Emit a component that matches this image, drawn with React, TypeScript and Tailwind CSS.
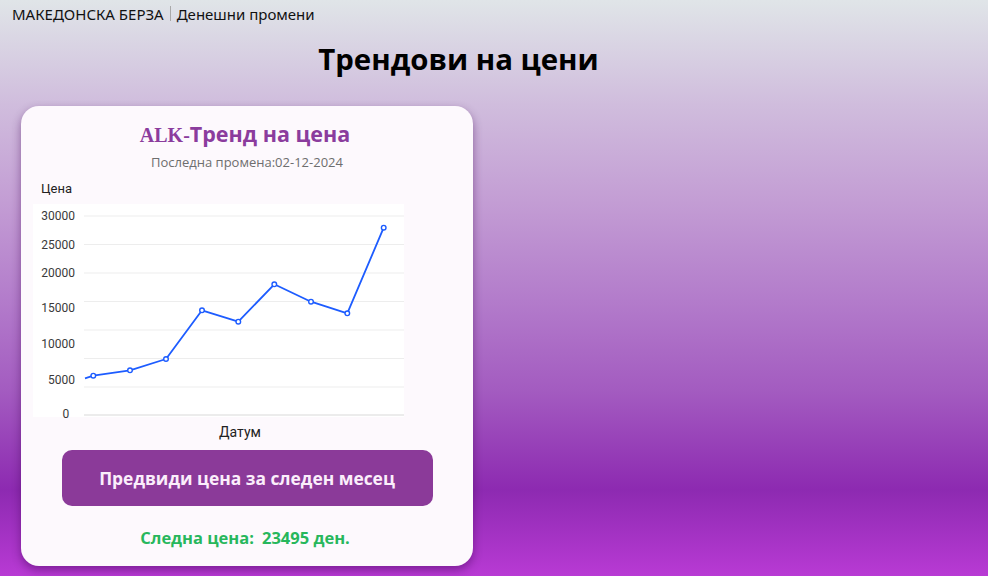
import React from 'react';

const points: [number, number][] = [
  [93.3, 375.7],
  [130, 370.3],
  [166, 359],
  [202, 310.3],
  [238.3, 321.7],
  [274.3, 284.3],
  [311, 301.7],
  [347.3, 313.3],
  [383.7, 227.7],
];

const gridY = [216, 244.5, 273, 301.5, 330, 358.5, 387, 415];

const yLabels: { text: string; x: number; y: number; anchor: 'end' | 'start' }[] = [
  { text: '30000', x: 75, y: 216, anchor: 'end' },
  { text: '25000', x: 75, y: 245, anchor: 'end' },
  { text: '20000', x: 75, y: 273, anchor: 'end' },
  { text: '15000', x: 75, y: 308, anchor: 'end' },
  { text: '10000', x: 75, y: 344, anchor: 'end' },
  { text: '5000', x: 75, y: 380, anchor: 'end' },
  { text: '0', x: 62.5, y: 414, anchor: 'start' },
];

// chart svg is positioned at page x=31, y=200
const OX = 31;
const OY = 200;

function PriceChart() {
  const line = [[85, 378.3], ...points]
    .map(([x, y], i) => `${i === 0 ? 'M' : 'L'}${(x - OX).toFixed(1)} ${(y - OY).toFixed(1)}`)
    .join(' ');

  return (
    <svg width={379} height={222} className="block ml-[10px]" style={{ fontFamily: 'Roboto, sans-serif' }}>
      <rect x={2} y={4} width={371} height={213} fill="#ffffff" />
      {gridY.map((y, i) => (
        <line
          key={y}
          x1={84 - OX}
          x2={404 - OX}
          y1={y - OY}
          y2={y - OY}
          stroke={i === gridY.length - 1 ? '#d9d9d9' : '#ededed'}
          strokeWidth={1}
        />
      ))}
      {yLabels.map((l) => (
        <text
          key={l.text}
          x={l.x - OX}
          y={l.y - OY + 4.3}
          textAnchor={l.anchor}
          fontSize={12}
          fill="#3a3a3a"
        >
          {l.text}
        </text>
      ))}
      <path d={line} fill="none" stroke="#1d5cff" strokeWidth={1.8} strokeLinejoin="round" />
      {points.map(([x, y]) => (
        <circle key={x} cx={x - OX} cy={y - OY} r={2.3} fill="#ffffff" stroke="#1d5cff" strokeWidth={1.4} />
      ))}
    </svg>
  );
}

export default function App() {
  return (
    <div
      className="w-full h-[576px] overflow-hidden bg-[linear-gradient(to_bottom,#e0e5e8_0%,#d0bddd_18%,#c39dd4_35%,#b37ccb_52%,#a35bc0_68%,#8d2ab1_85%,#b83ad4_100%)]"
      style={{ fontFamily: '"Open Sans", sans-serif' }}
    >
      <div className="flex items-center pl-[12px] pt-[5px] h-[22px] text-[15px] leading-[20px] text-[#111]" style={{ fontFamily: '"Noto Sans", sans-serif' }}>
        <span>МАКЕДОНСКА БЕРЗА</span>
        <span className="mx-[6px] w-px h-[15px] bg-[#a9a9a9]" />
        <span>Денешни промени</span>
      </div>

      <h1 className="w-[917px] mt-[17px] text-center text-[29.4px] leading-[40px] font-bold text-black">
        Трендови на цени
      </h1>

      <div className="ml-[21px] mt-[27px] w-[452px] h-[460px] rounded-[18px] bg-[#fdf9fd] shadow-[0_4px_10px_rgba(60,0,80,0.45)] pt-[14px]">
        <div className="pr-[4px] text-center text-[21.5px] leading-[28px] font-bold text-[#8b3c9d]">
          <span className="text-[20px]" style={{ fontFamily: '"Liberation Serif", serif' }}>
            ALK-
          </span>
          <span>Тренд на цена</span>
        </div>
        <p className="mt-[4px] text-center text-[13px] leading-[18px] text-[#6e6e6e]">
          Последна промена:02-12-2024
        </p>
        <p className="mt-[9px] ml-[20px] text-[13px] leading-[18px] text-[#222]" style={{ fontFamily: 'Roboto, sans-serif' }}>
          Цена
        </p>
        <div className="mt-[2px]">
          <PriceChart />
        </div>
        <p className="mt-[1px] pr-[14px] text-center text-[14px] leading-[18px] text-[#222]" style={{ fontFamily: 'Roboto, sans-serif' }}>
          Датум
        </p>
        <button className="mt-[9px] mx-auto flex items-center justify-center w-[371px] h-[56px] rounded-[10px] bg-[#8b3a99] text-[17.4px] font-bold text-[#fbeefb]">
          Предвиди цена за следен месец
        </button>
        <p className="mt-[20px] pr-[4px] text-center text-[16.5px] leading-[24px] font-bold text-[#27b75c]">
          <span>Следна цена:</span>
          <span className="ml-[8px]">23495 ден.</span>
        </p>
      </div>
    </div>
  );
}
